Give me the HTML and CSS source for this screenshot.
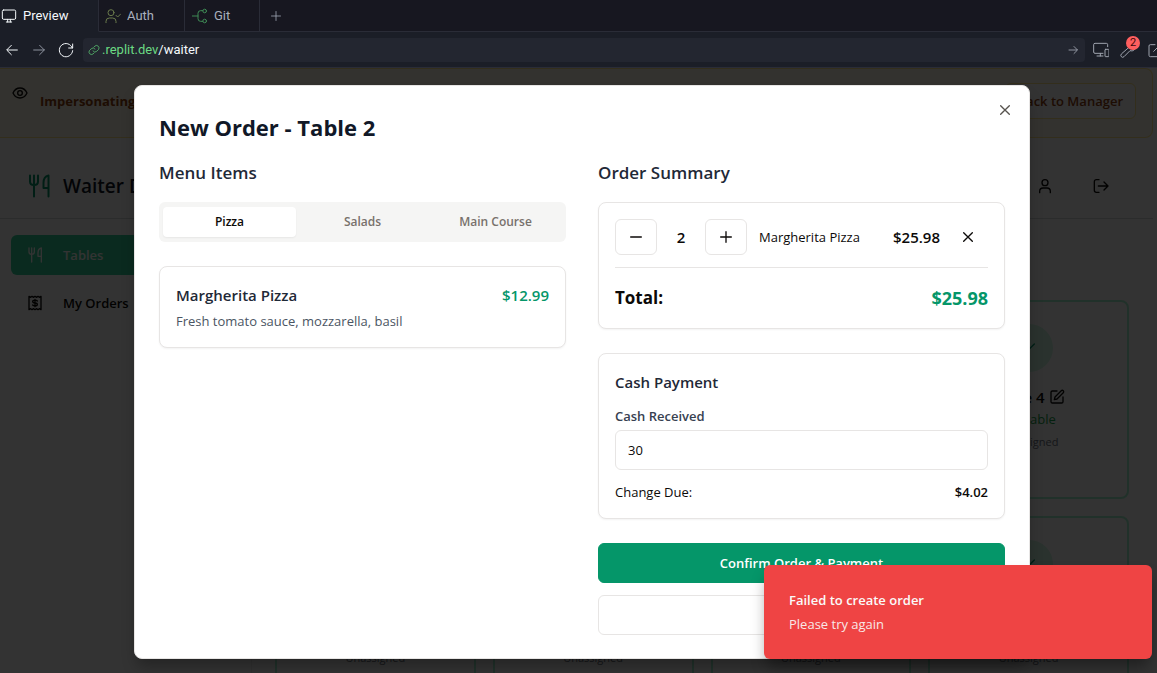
FILE: index.html
```html
<!DOCTYPE html>
<html lang="en">
<head>
<meta charset="utf-8">
<title>Preview</title>
<link rel="stylesheet" href="styles.css">
</head>
<body>
<svg class="sprite" aria-hidden="true">
  <symbol id="utensils" viewBox="0 0 24 24"><path d="M3 1.500v6q0 3.500 4 3.500t4-3.500v-6M7 1.500v21M21.500 22.500v-21q-5 1-5 7.500v5h5"/></symbol>
  <symbol id="check" viewBox="0 0 24 24"><path d="M20 6 9 17l-5-5"/></symbol>
  <symbol id="edit" viewBox="0 0 24 24"><path d="M12 3H5a2 2 0 0 0-2 2v14a2 2 0 0 0 2 2h14a2 2 0 0 0 2-2v-7"/><path d="M18.400 2.600a2.100 2.100 0 0 1 3 3L12 15l-4 1 1-4Z"/></symbol>
  <symbol id="x" viewBox="0 0 24 24"><path d="M18.500 5.500l-13 13M5.500 5.500l13 13"/></symbol>
</svg>

<header class="chrome">
  <nav class="tabs">
    <a class="tab tab-active" href="#preview"><svg class="icon i16" viewBox="0 0 24 24"><rect x="2" y="3" width="20" height="14" rx="2"/><path d="M8 21h8M10 17v4M14 17v4"/></svg>Preview</a>
    <a class="tab tab-auth" href="#auth"><svg class="icon i16" viewBox="0 0 24 24"><circle cx="9" cy="7" r="4.500"/><path d="M1.500 22v-2q0-5 5-5h5q5 0 5 5v2M16.500 11l2.500 2.500 4.500-4.500"/></svg>Auth</a>
    <a class="tab tab-git" href="#git"><svg class="icon i16" viewBox="0 0 24 24"><path d="M0 12h9M16 4h-3q-4 0-4 4v8q0 4 4 4h3"/><circle cx="19" cy="4.500" r="2.700"/><circle cx="19" cy="19.500" r="2.700"/></svg>Git</a>
    <button class="tab tab-new" aria-label="New tab"><svg class="icon i12" viewBox="0 0 24 24"><path d="M12 3v18M3 12h18"/></svg></button>
  </nav>
  <div class="toolbar">
    <button class="tool" aria-label="Back"><svg class="icon i16" viewBox="0 0 24 24"><path d="M20 12H5M11 5l-7 7 7 7"/></svg></button>
    <button class="tool tool-dim" aria-label="Forward"><svg class="icon i16" viewBox="0 0 24 24"><path d="M4 12h16M13 5l7 7-7 7"/></svg></button>
    <button class="tool" aria-label="Reload"><svg class="icon i16" viewBox="0 0 24 24"><path d="M22 3v6h-6M21.500 9A10 10 0 1 0 22 13"/></svg></button>
    <div class="address">
      <svg class="icon i12 link" viewBox="0 0 24 24"><path d="M10 14a5 5 0 0 0 7.500.5l3.500-3.500a5 5 0 0 0-7-7l-2 2M14 10a5 5 0 0 0-7.500-.5L3 13a5 5 0 0 0 7 7l2-2"/></svg>
      <span class="host">.replit.dev</span><span class="path">/waiter</span>
      <button class="go" aria-label="Go"><svg class="icon i12" viewBox="0 0 24 24"><path d="M4 12h16M14 5l7 7-7 7"/></svg></button>
    </div>
    <button class="tool tool-grey" aria-label="Devices"><svg class="icon i16" viewBox="0 0 24 24"><path d="M15 17H3a2 2 0 0 1-2-2V4a2 2 0 0 1 2-2h17a2 2 0 0 1 2 2v3M6 21h9M11 17v4"/><rect x="18" y="11" width="6" height="11" rx="1"/></svg></button>
    <button class="tool tool-grey tool-badged" aria-label="Dev tools, 2 issues"><svg class="icon i16" viewBox="0 0 24 24"><path d="M14 7a6 6 0 0 1 7-5l-3 4 2 2 3-2a6 6 0 0 1-8 7L6 22a2.500 2.500 0 0 1-4-4Z"/></svg><span class="badge">2</span></button>
    <button class="tool tool-grey" aria-label="Open in new window"><svg class="icon i16" viewBox="0 0 24 24"><path d="M12 4H5a2 2 0 0 0-2 2v14a2 2 0 0 0 2 2h13a2 2 0 0 0 2-2v-7M16 2h6v6M22 2 10 14"/></svg></button>
  </div>
</header>

<div class="viewport">
  <div class="app">
    <div class="banner">
      <svg class="icon i16 eye" viewBox="0 0 24 24"><path d="M1.500 12Q5 4.500 12 4.500T22.500 12Q19 19.500 12 19.500T1.500 12Z"/><circle cx="12" cy="12" r="3.500"/></svg>
      <strong class="banner-text">Impersonating Waiter</strong>
      <button class="banner-button">Back to Manager</button>
    </div>
    <div class="app-header">
      <svg class="icon i24 brand"><use href="#utensils"/></svg>
      <h1 class="app-title">Waiter Dashboard</h1>
      <button class="app-tool" aria-label="Profile"><svg class="icon i16" viewBox="0 0 24 24"><circle cx="12" cy="7" r="4.500"/><path d="M4 22v-2q0-5 5-5h6q5 0 5 5v2"/></svg></button>
      <button class="app-tool" aria-label="Log out"><svg class="icon i16" viewBox="0 0 24 24"><path d="M9 21.500H5a3 3 0 0 1-3-3v-13a3 3 0 0 1 3-3h4M8 12h14M16.500 6l6 6-6 6"/></svg></button>
    </div>
    <div class="app-body">
      <nav class="sidebar">
        <a class="side-link side-active" href="#tables"><svg class="icon i16"><use href="#utensils"/></svg>Tables</a>
        <a class="side-link" href="#orders"><svg class="icon i16" viewBox="0 0 24 24"><path d="M3 2l2.500 1.500L7.500 2l2.500 1.500L12 2l2 1.500L16.500 2l2 1.500L21 2v20l-2.500-1.500-2 1.500-2.500-1.500-2 1.500-2-1.500L7.500 22l-2-1.500L3 22Z"/><path d="M15.500 9q-1-1.200-3.500-1.200-3.500 0-3.500 2t3.500 2.200 3.500 2.200-3.500 2q-2.500 0-3.500-1.200M12 6.500v11"/></svg>My Orders</a>
      </nav>
      <main class="grid">
        <article class="table-card"><span class="status-dot"><svg class="icon i16"><use href="#check"/></svg></span><h2 class="table-name">Table 1 <svg class="icon i16"><use href="#edit"/></svg></h2><p class="available">Available</p><p class="assignee">Unassigned</p></article>
        <article class="table-card"><span class="status-dot"><svg class="icon i16"><use href="#check"/></svg></span><h2 class="table-name">Table 2 <svg class="icon i16"><use href="#edit"/></svg></h2><p class="available">Available</p><p class="assignee">Unassigned</p></article>
        <article class="table-card"><span class="status-dot"><svg class="icon i16"><use href="#check"/></svg></span><h2 class="table-name">Table 3 <svg class="icon i16"><use href="#edit"/></svg></h2><p class="available">Available</p><p class="assignee">Unassigned</p></article>
        <article class="table-card"><span class="status-dot"><svg class="icon i16"><use href="#check"/></svg></span><h2 class="table-name">Table 4 <svg class="icon i16"><use href="#edit"/></svg></h2><p class="available">Available</p><p class="assignee">Unassigned</p></article>
        <article class="table-card"><span class="status-dot"><svg class="icon i16"><use href="#check"/></svg></span><h2 class="table-name">Table 5 <svg class="icon i16"><use href="#edit"/></svg></h2><p class="available">Available</p><p class="assignee">Unassigned</p></article>
        <article class="table-card"><span class="status-dot"><svg class="icon i16"><use href="#check"/></svg></span><h2 class="table-name">Table 6 <svg class="icon i16"><use href="#edit"/></svg></h2><p class="available">Available</p><p class="assignee">Unassigned</p></article>
        <article class="table-card"><span class="status-dot"><svg class="icon i16"><use href="#check"/></svg></span><h2 class="table-name">Table 7 <svg class="icon i16"><use href="#edit"/></svg></h2><p class="available">Available</p><p class="assignee">Unassigned</p></article>
        <article class="table-card"><span class="status-dot"><svg class="icon i16"><use href="#check"/></svg></span><h2 class="table-name">Table 8 <svg class="icon i16"><use href="#edit"/></svg></h2><p class="available">Available</p><p class="assignee">Unassigned</p></article>
      </main>
    </div>
  </div>

  <div class="overlay">
    <div class="dialog" role="dialog" aria-labelledby="dialog-title">
      <button class="close" aria-label="Close"><svg class="icon i16"><use href="#x"/></svg></button>
      <h2 class="dialog-title" id="dialog-title">New Order - Table 2</h2>
      <div class="columns">
        <section class="menu">
          <h3 class="section-title">Menu Items</h3>
          <div class="segments" role="tablist">
            <button class="segment segment-active" role="tab" aria-selected="true">Pizza</button>
            <button class="segment" role="tab" aria-selected="false">Salads</button>
            <button class="segment" role="tab" aria-selected="false">Main Course</button>
          </div>
          <div class="panel item">
            <div class="row"><h4 class="item-title">Margherita Pizza</h4><span class="item-price">$12.99</span></div>
            <p class="item-text">Fresh tomato sauce, mozzarella, basil</p>
          </div>
        </section>
        <section class="summary">
          <h3 class="section-title">Order Summary</h3>
          <div class="stack">
            <div class="panel">
              <div class="line">
                <button class="step" aria-label="Decrease"><svg class="icon i16" viewBox="0 0 24 24"><path d="M4 12h16"/></svg></button>
                <span class="count">2</span>
                <button class="step" aria-label="Increase"><svg class="icon i16" viewBox="0 0 24 24"><path d="M4 12h16M12 4v16"/></svg></button>
                <span class="line-name">Margherita Pizza</span>
                <span class="line-price">$25.98</span>
                <button class="remove" aria-label="Remove"><svg class="icon i16"><use href="#x"/></svg></button>
              </div>
              <div class="row total"><span>Total:</span><span class="total-value">$25.98</span></div>
            </div>
            <div class="panel cash">
              <h4 class="item-title">Cash Payment</h4>
              <label class="cash-label" for="cash">Cash Received</label>
              <input class="cash-input" id="cash" type="text" inputmode="decimal" value="30">
              <div class="row change"><span>Change Due:</span><span class="change-value">$4.02</span></div>
            </div>
            <div class="actions">
              <button class="action action-main">Confirm Order &amp; Payment</button>
              <button class="action" aria-label="Cancel"></button>
            </div>
          </div>
        </section>
      </div>
    </div>
  </div>

  <div class="toast" role="alert">
    <strong class="toast-title">Failed to create order</strong>
    <span class="toast-text">Please try again</span>
  </div>
</div>
</body>
</html>
```

FILE: styles.css
```css
*, *::before, *::after { box-sizing: border-box; }
body {
  margin: 0;
  height: 100vh;
  display: flex;
  flex-direction: column;
  overflow: hidden;
  font-family: "Open Sans", "Noto Sans", sans-serif;
  font-size: 13px;
  line-height: 20px;
  color: #0c0a09;
}
h1, h2, h3, h4, p { margin: 0; }
button, input { font: inherit; color: inherit; margin: 0; }
button { display: flex; align-items: center; justify-content: center; padding: 0; border: 0; background: none; }
a { color: inherit; text-decoration: none; }
.sprite { display: none; }
.icon { flex: none; fill: none; stroke: currentColor; stroke-width: 2; stroke-linecap: round; stroke-linejoin: round; }
.i12 { width: 12px; height: 12px; }
.i16 { width: 16px; height: 16px; }
.i24 { width: 24px; height: 24px; }

/* Browser pane */
.chrome { flex: none; overflow: hidden; background: #1b1e27; color: #f5f9fc; font-family: Roboto, sans-serif; font-size: 13px; }
.chrome .icon { stroke-width: 1.5; }
.tabs { display: flex; height: 32px; background: #171720; }
.tab { display: flex; align-items: center; gap: 6px; padding: 0 8px; border-right: 1px solid #2a2c37; border-bottom: 1px solid #2a2c37; color: #a9b0bd; }
.tabs::after { content: ""; flex: 1; border-bottom: 1px solid #2a2c37; }
.tab-active { width: 99px; padding: 0 1px; border-bottom-color: #1b1e27; background: #1b1e27; color: #f5f9fc; }
.tab-auth { width: 86px; padding: 0 6px; }
.tab-auth .icon { color: #6a7a4c; }
.tab-git { width: 75px; padding: 0 7px; }
.tab-git .icon { color: #3f8a55; }
.tab-new { border-right: 0; padding: 0 10px; }
.toolbar { display: flex; align-items: center; gap: 11px; height: 36px; margin-right: -6px; padding-left: 4px; border-bottom: 1px solid #2a2c37; }
.tool { flex: none; width: 16px; }
.tool-dim { color: #8d929e; }
.tool-grey { color: #9ea3ae; }
.address { flex: 1; display: flex; align-items: center; height: 24px; padding: 0 6px 0 5px; margin: 0 -3px 0 -2px; border-radius: 4px; background: #232630; }
.link { margin-right: 2px; color: #5bc873; }
.host { color: #6bd983; }
.path { flex: 1; }
.go { color: #b4b9c4; }
.tool-badged { position: relative; }
.badge { position: absolute; top: -6px; right: -4px; width: 14px; height: 14px; border-radius: 50%; background: #ff5f5f; color: #3d0808; font-size: 11px; line-height: 14px; text-align: center; }

/* Application behind the dialog */
.viewport { position: relative; flex: 1; min-height: 0; overflow: hidden; background: #fff; }
.app { height: 100%; margin-right: 4px; overflow: hidden; background: #fcfcfc; }
.banner { display: flex; align-items: flex-start; gap: 12px; height: 70px; padding: 14px 16px 0 12px; border: 1px solid #fde68a; border-left: 0; border-radius: 0 8px 8px 0; background: #fffbeb; color: #92400e; }
.eye { margin-top: 2px; color: #0c0a09; }
.banner-text { flex: 1; line-height: 36px; font-weight: 700; }
.banner-button { height: 36px; padding: 0 12px; border: 1px solid #fde68a; border-radius: 6px; background: #fff; font-weight: 600; }
.app-header { display: flex; align-items: center; gap: 12px; height: 66px; margin-top: 15px; padding: 0 44px 0 27px; border-bottom: 1px solid #d6d9dd; background: #fff; }
.brand { color: #059669; }
.app-title { flex: 1; font-size: 19px; font-weight: 600; color: #111827; }
.app-tool { width: 16px; margin-left: 28px; }
.app-body { display: flex; align-items: flex-start; }
.sidebar { flex: none; display: flex; flex-direction: column; gap: 8px; width: 252px; height: 600px; padding: 16px 12px 0 11px; border-right: 1px solid #f0f0f0; background: #fff; }
.side-link { display: flex; align-items: center; gap: 20px; height: 40px; padding: 0 16px; border-radius: 6px; font-weight: 600; }
.side-active { background: #34d399; color: #fff; }
.grid { flex: 1; display: grid; grid-template-columns: repeat(4, 1fr); gap: 17px; padding: 81px 24px 0 23px; }
.table-card { display: flex; flex-direction: column; align-items: center; height: 199px; padding: 22px; border: 2px solid #a7f3d0; border-radius: 8px; background: #fff; }
.status-dot { display: flex; align-items: center; justify-content: center; width: 48px; height: 48px; border-radius: 50%; background: #d1fae5; color: #059669; }
.table-name { display: flex; align-items: center; gap: 4px; margin-top: 13px; font-size: 15px; line-height: 24px; font-weight: 600; }
.available { color: #16a34a; }
.assignee { font-size: 11px; line-height: 26px; color: #6b7280; }

/* Dialog */
.overlay { position: absolute; inset: 0; display: flex; align-items: flex-start; justify-content: center; padding: 17px 0 0 7px; background: rgba(0, 0, 0, 0.8); }
.dialog { position: relative; width: 896px; max-width: 100%; padding: 24px 24px 23px; border: 1px solid #e7e5e4; border-radius: 8px; background: #fff; box-shadow: 0 10px 15px -3px rgba(0, 0, 0, 0.3); }
.close { position: absolute; top: 16px; right: 16px; color: #57534e; }
.dialog-title { font-size: 22px; line-height: 34px; font-weight: 700; color: #111827; }
.columns { display: grid; grid-template-columns: 1fr 1fr; gap: 32px; margin-top: 14px; }
.section-title { margin-bottom: 14px; font-size: 17px; line-height: 30px; font-weight: 600; color: #1f2937; }
.segments { display: grid; grid-template-columns: repeat(3, 1fr); height: 40px; padding: 5px 4px; border-radius: 6px; background: #f5f5f4; }
.segment { border-radius: 4px; font-size: 12px; font-weight: 600; color: #78716c; }
.segment-active { background: #fff; color: #0c0a09; box-shadow: 0 1px 2px rgba(0, 0, 0, 0.06); }
.panel { padding: 16px; border: 1px solid #e7e5e4; border-radius: 8px; background: #fff; box-shadow: 0 1px 2px rgba(0, 0, 0, 0.05); }
.item { margin-top: 24px; }
.row { display: flex; align-items: center; justify-content: space-between; }
.item-title, .item-price { font-size: 15px; line-height: 24px; font-weight: 600; color: #1f2937; }
.item-price { color: #059669; }
.item-text { margin-top: 4px; color: #4b5563; }
.stack { display: flex; flex-direction: column; gap: 24px; }
.line { display: flex; align-items: center; padding-bottom: 12px; border-bottom: 1px solid #e7e5e4; }
.step { width: 42px; height: 36px; border: 1px solid #e7e5e4; border-radius: 6px; }
.count { width: 48px; font-size: 15px; font-weight: 600; text-align: center; }
.line-name { flex: 1; margin-left: 12px; }
.line-price { font-size: 15px; font-weight: 600; }
.remove { width: 40px; height: 36px; margin-left: 8px; }
.total { margin-top: 16px; font-size: 17px; line-height: 28px; font-weight: 700; }
.total-value { font-size: 18px; color: #059669; }
.cash { display: flex; flex-direction: column; }
.cash-label { margin: 12px 0 4px; font-weight: 600; color: #374151; }
.cash-input { width: 100%; height: 40px; padding: 0 12px; border: 1px solid #e7e5e4; border-radius: 6px; background: #fff; }
.change { margin-top: 12px; }
.change-value { font-weight: 600; }
.actions { display: flex; flex-direction: column; gap: 12px; }
.action { height: 40px; border: 1px solid #e7e5e4; border-radius: 6px; background: #fff; font-weight: 600; }
.action-main { border-color: #059669; background: #059669; color: #fff; }

.toast { position: absolute; right: 5px; bottom: 14px; display: flex; flex-direction: column; gap: 4px; width: 388px; padding: 25px; border-radius: 6px; background: #ef4444; color: #fafaf9; box-shadow: 0 10px 15px -3px rgba(0, 0, 0, 0.4); }
.toast-title { font-weight: 600; }
.toast-text { opacity: 0.9; }
```
